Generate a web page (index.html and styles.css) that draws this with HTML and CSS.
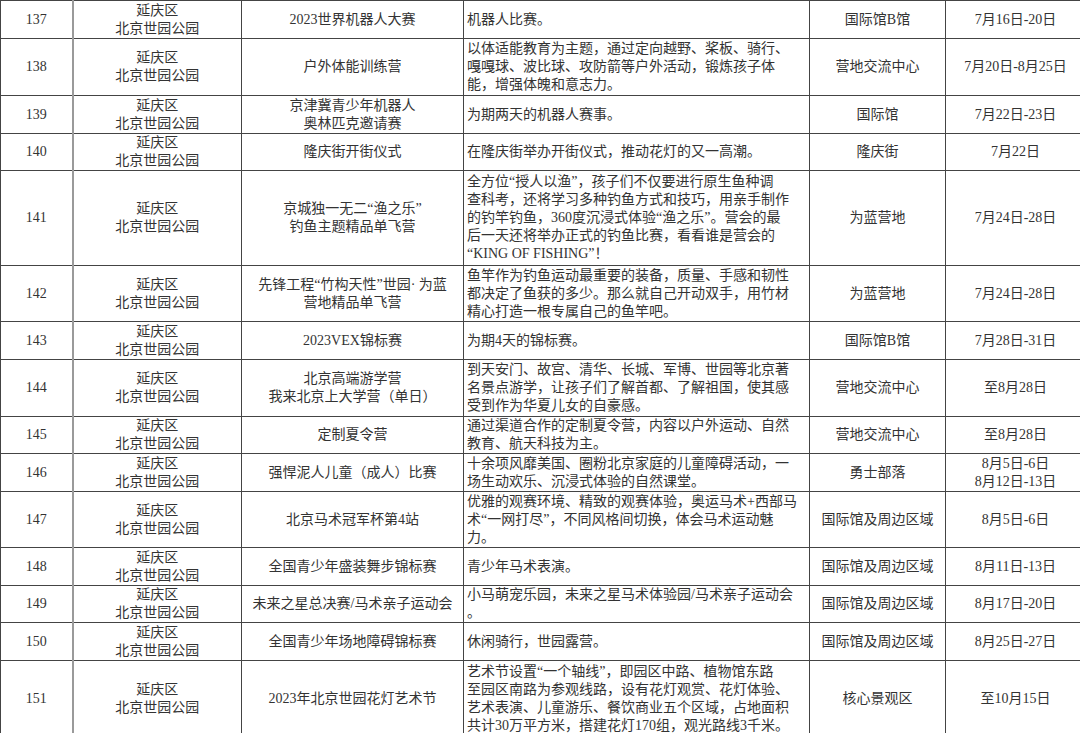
FILE: index.html
```html
<!DOCTYPE html>
<html lang="zh-CN">
<head>
<meta charset="utf-8">
<title>活动列表</title>
<link rel="stylesheet" href="styles.css">
</head>
<body>
<table class="events">
  <colgroup>
    <col class="c-no"><col class="c-area"><col class="c-name"><col class="c-desc"><col class="c-place"><col class="c-date">
  </colgroup>
  <tbody>
    <tr class="l2">
      <td class="no">137</td><td class="area">延庆区<br>北京世园公园</td><td class="name">2023世界机器人大赛</td>
      <td class="desc">机器人比赛。</td><td class="place">国际馆B馆</td><td class="date">7月16日-20日</td>
    </tr>
    <tr class="l3">
      <td class="no">138</td><td class="area">延庆区<br>北京世园公园</td><td class="name">户外体能训练营</td>
      <td class="desc">以体适能教育为主题，通过定向越野、桨板、骑行、<br>嘎嘎球、波比球、攻防箭等户外活动，锻炼孩子体<br>能，增强体魄和意志力。</td><td class="place">营地交流中心</td><td class="date">7月20日-8月25日</td>
    </tr>
    <tr class="l2">
      <td class="no">139</td><td class="area">延庆区<br>北京世园公园</td><td class="name">京津冀青少年机器人<br>奥林匹克邀请赛</td>
      <td class="desc">为期两天的机器人赛事。</td><td class="place">国际馆</td><td class="date">7月22日-23日</td>
    </tr>
    <tr class="l2s">
      <td class="no">140</td><td class="area">延庆区<br>北京世园公园</td><td class="name">隆庆街开街仪式</td>
      <td class="desc">在隆庆街举办开街仪式，推动花灯的又一高潮。</td><td class="place">隆庆街</td><td class="date">7月22日</td>
    </tr>
    <tr class="l5">
      <td class="no">141</td><td class="area">延庆区<br>北京世园公园</td><td class="name">京城独一无二“渔之乐”<br>钓鱼主题精品单飞营</td>
      <td class="desc">全方位“授人以渔”，孩子们不仅要进行原生鱼种调<br>查科考，还将学习多种钓鱼方式和技巧，用亲手制作<br>的钓竿钓鱼，360度沉浸式体验“渔之乐”。营会的最<br>后一天还将举办正式的钓鱼比赛，看看谁是营会的<br>“KING OF FISHING”！</td><td class="place">为蓝营地</td><td class="date">7月24日-28日</td>
    </tr>
    <tr class="l3s">
      <td class="no">142</td><td class="area">延庆区<br>北京世园公园</td><td class="name">先锋工程“竹构天性”世园· 为蓝<br>营地精品单飞营</td>
      <td class="desc">鱼竿作为钓鱼运动最重要的装备，质量、手感和韧性<br>都决定了鱼获的多少。那么就自己开动双手，用竹材<br>精心打造一根专属自己的鱼竿吧。</td><td class="place">为蓝营地</td><td class="date">7月24日-28日</td>
    </tr>
    <tr class="l2">
      <td class="no">143</td><td class="area">延庆区<br>北京世园公园</td><td class="name">2023VEX锦标赛</td>
      <td class="desc">为期4天的锦标赛。</td><td class="place">国际馆B馆</td><td class="date">7月28日-31日</td>
    </tr>
    <tr class="l3">
      <td class="no">144</td><td class="area">延庆区<br>北京世园公园</td><td class="name">北京高端游学营<br>我来北京上大学营（单日）</td>
      <td class="desc">到天安门、故宫、清华、长城、军博、世园等北京著<br>名景点游学，让孩子们了解首都、了解祖国，使其感<br>受到作为华夏儿女的自豪感。</td><td class="place">营地交流中心</td><td class="date">至8月28日</td>
    </tr>
    <tr class="l2s">
      <td class="no">145</td><td class="area">延庆区<br>北京世园公园</td><td class="name">定制夏令营</td>
      <td class="desc">通过渠道合作的定制夏令营，内容以户外运动、自然<br>教育、航天科技为主。</td><td class="place">营地交流中心</td><td class="date">至8月28日</td>
    </tr>
    <tr class="l2">
      <td class="no">146</td><td class="area">延庆区<br>北京世园公园</td><td class="name">强悍泥人儿童（成人）比赛</td>
      <td class="desc">十余项风靡美国、圈粉北京家庭的儿童障碍活动，一<br>场生动欢乐、沉浸式体验的自然课堂。</td><td class="place">勇士部落</td><td class="date">8月5日-6日<br>8月12日-13日</td>
    </tr>
    <tr class="l3s">
      <td class="no">147</td><td class="area">延庆区<br>北京世园公园</td><td class="name">北京马术冠军杯第4站</td>
      <td class="desc">优雅的观赛环境、精致的观赛体验，奥运马术+西部马<br>术“一网打尽”，不同风格间切换，体会马术运动魅<br>力。</td><td class="place">国际馆及周边区域</td><td class="date">8月5日-6日</td>
    </tr>
    <tr class="l2">
      <td class="no">148</td><td class="area">延庆区<br>北京世园公园</td><td class="name">全国青少年盛装舞步锦标赛</td>
      <td class="desc">青少年马术表演。</td><td class="place">国际馆及周边区域</td><td class="date">8月11日-13日</td>
    </tr>
    <tr class="l2s">
      <td class="no">149</td><td class="area">延庆区<br>北京世园公园</td><td class="name">未来之星总决赛/马术亲子运动会</td>
      <td class="desc">小马萌宠乐园，未来之星马术体验园/马术亲子运动会<br>。</td><td class="place">国际馆及周边区域</td><td class="date">8月17日-20日</td>
    </tr>
    <tr class="l2">
      <td class="no">150</td><td class="area">延庆区<br>北京世园公园</td><td class="name">全国青少年场地障碍锦标赛</td>
      <td class="desc">休闲骑行，世园露营。</td><td class="place">国际馆及周边区域</td><td class="date">8月25日-27日</td>
    </tr>
    <tr class="l4">
      <td class="no">151</td><td class="area">延庆区<br>北京世园公园</td><td class="name">2023年北京世园花灯艺术节</td>
      <td class="desc">艺术节设置“一个轴线”，即园区中路、植物馆东路<br>至园区南路为参观线路，设有花灯观赏、花灯体验、<br>艺术表演、儿童游乐、餐饮商业五个区域，占地面积<br>共计30万平方米，搭建花灯170组，观光路线3千米。</td><td class="place">核心景观区</td><td class="date">至10月15日</td>
    </tr>
  </tbody>
</table>
</body>
</html>
```

FILE: styles.css
```css
html, body {
  margin: 0;
  padding: 0;
  background: #ffffff;
  overflow: hidden;
}

body {
  width: 1080px;
  height: 733px;
}

.events {
  border-collapse: collapse;
  table-layout: fixed;
  width: 1085px;
  font-family: "Liberation Serif", "Noto Sans CJK SC", serif;
  font-size: 14px;
  line-height: 18px;
  color: #333333;
}

.c-no { width: 72px; }
.c-area { width: 169px; }
.c-name { width: 222px; }
.c-desc { width: 346px; }
.c-place { width: 136px; }
.c-date { width: 140px; }

.events td {
  border: 1px solid #444444;
  padding: 0;
  vertical-align: middle;
  text-align: center;
  white-space: nowrap;
  overflow: hidden;
}

.events td.no {
  border-right: 2px solid #9a9a9a;
}

.events td.desc {
  text-align: left;
  padding-left: 3px;
}

.l2 { height: 38px; }
.l2s { height: 37px; }
.l3 { height: 57px; }
.l3s { height: 56px; }
.l4 { height: 76px; }
.l5 { height: 95px; }
```
